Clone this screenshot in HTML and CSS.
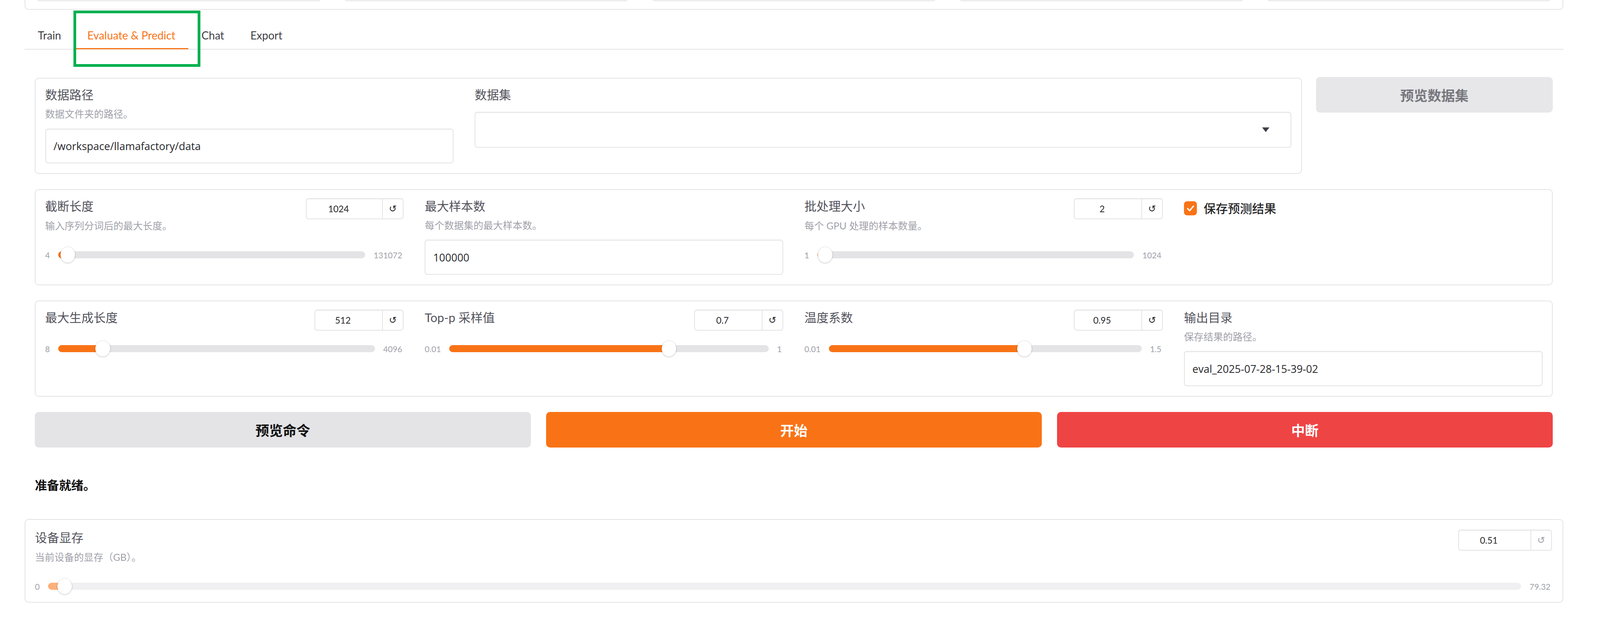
FILE: index.html
```html
<!DOCTYPE html>
<html lang="zh-CN">
<head>
<meta charset="utf-8">
<meta name="viewport" content="width=device-width, initial-scale=1">
<title>LLaMA Factory - Evaluate &amp; Predict</title>
<link rel="stylesheet" href="styles.css">
</head>
<body>
<div class="app">
  <div class="top-card">
    <div class="top-input"></div>
    <div class="top-input"></div>
    <div class="top-input"></div>
    <div class="top-input"></div>
    <div class="top-input"></div>
  </div>

  <div class="tab-nav">
    <button class="tab">Train</button>
    <button class="tab active">Evaluate &amp; Predict</button>
    <button class="tab">Chat</button>
    <button class="tab">Export</button>
  </div>

  <div class="panel">
    <div class="row-data">
      <div class="card data-card">
        <div class="field field-path">
          <div class="label">数据路径</div>
          <div class="info">数据文件夹的路径。</div>
          <div class="textbox">/workspace/llamafactory/data</div>
        </div>
        <div class="field field-dataset">
          <div class="label">数据集</div>
          <div class="dropdown">
            <svg class="dd-arrow" viewBox="0 0 20 12" preserveAspectRatio="none"><polygon points="0,0 20,0 10,12" fill="#3f3f46"/></svg>
          </div>
        </div>
      </div>
      <button class="btn btn-preview-data">预览数据集</button>
    </div>

    <div class="card grid4">
      <div class="slider-block">
        <div class="slider-head">
          <span class="label">截断长度</span>
          <div class="number"><span class="num-val w6">1024</span><span class="num-reset">↺</span></div>
        </div>
        <div class="info info-slider">输入序列分词后的最大长度。</div>
        <div class="slider">
          <span class="mm">4</span>
          <div class="track" style="--p:0.0078"><div class="fill"></div><div class="thumb"></div></div>
          <span class="mm">131072</span>
        </div>
      </div>
      <div class="field">
        <div class="label">最大样本数</div>
        <div class="info">每个数据集的最大样本数。</div>
        <div class="textbox tb2">100000</div>
      </div>
      <div class="slider-block">
        <div class="slider-head">
          <span class="label">批处理大小</span>
          <div class="number"><span class="num-val">2</span><span class="num-reset">↺</span></div>
        </div>
        <div class="info info-slider">每个 GPU 处理的样本数量。</div>
        <div class="slider">
          <span class="mm">1</span>
          <div class="track" style="--p:0.001"><div class="fill"></div><div class="thumb"></div></div>
          <span class="mm">1024</span>
        </div>
      </div>
      <div class="check-block">
        <span class="cb"><svg viewBox="0 0 36 36" preserveAspectRatio="none"><path d="M10 18.5 L15.5 24 L26 12.5" fill="none" stroke="#fff" stroke-width="3.5" stroke-linecap="round" stroke-linejoin="round"/></svg></span>
        <span class="cb-label">保存预测结果</span>
      </div>
    </div>

    <div class="card grid4">
      <div class="slider-block">
        <div class="slider-head">
          <span class="label">最大生成长度</span>
          <div class="number"><span class="num-val">512</span><span class="num-reset">↺</span></div>
        </div>
        <div class="slider">
          <span class="mm">8</span>
          <div class="track" style="--p:0.1233"><div class="fill"></div><div class="thumb"></div></div>
          <span class="mm">4096</span>
        </div>
      </div>
      <div class="slider-block">
        <div class="slider-head">
          <span class="label">Top-p 采样值</span>
          <div class="number"><span class="num-val">0.7</span><span class="num-reset">↺</span></div>
        </div>
        <div class="slider">
          <span class="mm">0.01</span>
          <div class="track" style="--p:0.697"><div class="fill"></div><div class="thumb"></div></div>
          <span class="mm">1</span>
        </div>
      </div>
      <div class="slider-block">
        <div class="slider-head">
          <span class="label">温度系数</span>
          <div class="number"><span class="num-val">0.95</span><span class="num-reset">↺</span></div>
        </div>
        <div class="slider">
          <span class="mm">0.01</span>
          <div class="track" style="--p:0.631"><div class="fill"></div><div class="thumb"></div></div>
          <span class="mm">1.5</span>
        </div>
      </div>
      <div class="field">
        <div class="label">输出目录</div>
        <div class="info">保存结果的路径。</div>
        <div class="textbox tb2">eval_2025-07-28-15-39-02</div>
      </div>
    </div>

    <div class="actions">
      <button class="btn btn-gray">预览命令</button>
      <button class="btn btn-orange">开始</button>
      <button class="btn btn-red">中断</button>
    </div>

    <div class="status">准备就绪。</div>
  </div>

  <div class="card mem-card">
    <div class="slider-block">
      <div class="slider-head">
        <span class="label">设备显存</span>
        <div class="number"><span class="num-val w5">0.51</span><span class="num-reset muted">↺</span></div>
      </div>
      <div class="info info-slider">当前设备的显存（GB）。</div>
      <div class="slider">
        <span class="mm">0</span>
        <div class="track light" style="--p:0.0064"><div class="fill"></div><div class="thumb"></div></div>
        <span class="mm">79.32</span>
      </div>
    </div>
  </div>

  <div class="highlight"></div>
</div>
</body>
</html>
```

FILE: styles.css
```css
/* Horizontal sizes use rem, where 1rem = 1/440 of the viewport width,
   so columns keep their proportions at any screen width.
   Vertical sizes and text use px. */
html {
  font-size: calc(100vw / 440);
  overflow: hidden;
}
* { box-sizing: border-box; }
html, body { margin: 0; padding: 0; background: #ffffff; }
body {
  height: 1617px;
  overflow: hidden;
  font-family: "Lato", "Noto Sans CJK SC", sans-serif;
  font-size: 16px;
  color: #27272a;
}
button { font-family: inherit; }

.app {
  position: relative;
  display: flow-root;
  padding: 0 10.1rem 0 6.8rem;
}

/* top card (cut off at the top of the screenshot) */
.top-card {
  margin-top: -90px;
  border: 2px solid #e4e4e7;
  border-radius: 10px;
  padding: 0 3.2rem 20px 3.1rem;
  display: grid;
  grid-template-columns: repeat(5, 1fr);
  column-gap: 6.5rem;
}
.top-input {
  height: 91px;
  border: 2px solid #e4e4e7;
  border-radius: 7px;
}

/* tabs */
.tab-nav {
  margin-top: 29px;
  display: flex;
  border-bottom: 2px solid #e4e4e7;
}
.tab {
  position: relative;
  height: 71px;
  padding: 0 3.6rem;
  border: none;
  background: none;
  font-size: 28px;
  color: #3f3f46;
  cursor: pointer;
}
.tab.active { color: #f97316; }
.tab.active::after {
  content: "";
  position: absolute;
  left: 0;
  right: 0;
  bottom: -1px;
  height: 3px;
  background: #f97316;
}

.highlight {
  position: absolute;
  left: 20.2rem;
  top: 27px;
  width: 34.9rem;
  height: 144px;
  border: 7px solid #00b050;
  pointer-events: none;
}

.panel {
  padding: 72px 2.9rem 0 2.8rem;
  display: flex;
  flex-direction: column;
  gap: 39px;
}

/* cards & fields */
.card {
  border: 2px solid #e4e4e7;
  border-radius: 10px;
  padding: 21px 2.6rem 25px 2.6rem;
  background: #fff;
}
.row-data {
  display: flex;
  column-gap: 3.9rem;
  align-items: flex-start;
}
.data-card {
  flex: 1;
  display: flex;
  column-gap: 5.8rem;
  align-items: flex-start;
}
.field { display: flex; flex-direction: column; min-width: 0; }
.field-path { flex: 1; }
.field-dataset { flex: 2; }

.label {
  font-size: 31px;
  line-height: 40px;
  color: #52525b;
  white-space: nowrap;
}
.info {
  font-size: 25px;
  line-height: 34px;
  color: #a1a1aa;
  margin-top: 12px;
  white-space: nowrap;
}
.textbox {
  margin-top: 21px;
  height: 89px;
  border: 2px solid #e4e4e7;
  border-radius: 7px;
  box-shadow: inset 0 2px 2px rgba(0,0,0,0.04);
  padding: 0 2.1rem;
  display: flex;
  align-items: center;
  font-family: "Open Sans", "Noto Sans CJK SC", sans-serif;
  font-size: 27px;
  color: #27272a;
}
.tb2 { margin-top: 20px; height: 90px; }
.dropdown {
  margin-top: 24px;
  height: 92px;
  border: 2px solid #e4e4e7;
  border-radius: 7px;
  box-shadow: inset 0 2px 2px rgba(0,0,0,0.04);
  display: flex;
  align-items: center;
  justify-content: flex-end;
  padding-right: 5.9rem;
}
.dd-arrow { width: 2rem; height: 12px; }

.btn {
  height: 91px;
  border: none;
  border-radius: 10px;
  font-size: 35px;
  font-weight: 700;
}
.btn-preview-data {
  width: 65.1rem;
  flex: none;
  margin-top: -2px;
  background: #e7e7ea;
  color: #77777d;
  font-weight: 600;
}

/* grids of controls */
.grid4 {
  display: grid;
  grid-template-columns: repeat(4, minmax(0, 1fr));
  column-gap: 5.8rem;
  align-items: start;
}

.slider-block {
  display: flex;
  flex-direction: column;
  min-width: 0;
}
.slider-head {
  display: flex;
  justify-content: space-between;
  align-items: flex-start;
  height: 54px;
}
.number {
  display: flex;
  height: 54px;
  border: 2px solid #e4e4e7;
  border-radius: 7px;
  box-shadow: inset 0 2px 2px rgba(0,0,0,0.04);
}
.num-val {
  width: 18.4rem;
  display: flex;
  align-items: center;
  justify-content: center;
  padding-right: 3.2rem;
  font-size: 23px;
  color: #27272a;
}
.num-val.w6 { width: 20.8rem; }
.num-val.w5 { width: 19.7rem; }
.num-reset {
  width: 5.7rem;
  border-left: 2px solid #e4e4e7;
  display: flex;
  align-items: center;
  justify-content: center;
  font-family: "DejaVu Sans", sans-serif;
  font-size: 24px;
  color: #27272a;
}
.num-reset.muted { color: #a1a1aa; }

.info-slider { margin-top: -1px; margin-bottom: 12px; }

.slider {
  display: flex;
  align-items: center;
  column-gap: 2.3rem;
  height: 42px;
  margin-top: 25px;
  padding-right: 0.4rem;
}
.mm {
  font-size: 21px;
  line-height: 1;
  color: #a1a1aa;
}
.track {
  flex: 1;
  position: relative;
  height: 18px;
  border-radius: 9px;
  background: #e4e4e7;
}
.fill {
  height: 100%;
  width: calc(2rem + var(--p) * (100% - 4rem));
  border-radius: 9px;
  background: #f97316;
}
.thumb {
  position: absolute;
  top: 50%;
  left: calc(var(--p) * (100% - 4rem));
  width: 4rem;
  height: 40px;
  margin-top: -20px;
  border-radius: 50%;
  background: #ffffff;
  box-shadow: 0 1px 4px rgba(0,0,0,0.22), 0 0 0 1px rgba(0,0,0,0.04);
}
.track.light { background: #f0f0f2; }
.track.light .fill { background: #fdb07a; }

.check-block {
  display: flex;
  align-items: center;
  column-gap: 1.8rem;
  padding-top: 6px;
}
.cb {
  width: 3.6rem;
  height: 36px;
  border-radius: 8px;
  background: #f97316;
  display: flex;
}
.cb svg { width: 100%; height: 100%; }
.cb-label {
  font-size: 31px;
  line-height: 40px;
  color: #27272a;
  font-weight: 500;
}

/* actions */
.actions {
  display: grid;
  grid-template-columns: repeat(3, 1fr);
  column-gap: 4.2rem;
}
.btn-gray { background: #e4e4e7; color: #111111; }
.btn-orange { background: #f97316; color: #ffffff; }
.btn-red { background: #ef4444; color: #ffffff; }

.status {
  margin-top: 37px;
  font-size: 31px;
  line-height: 40px;
  font-weight: 700;
  color: #111111;
}

.mem-card {
  margin-top: 67px;
  padding: 25px 2.9rem 19px 2.6rem;
}
```
